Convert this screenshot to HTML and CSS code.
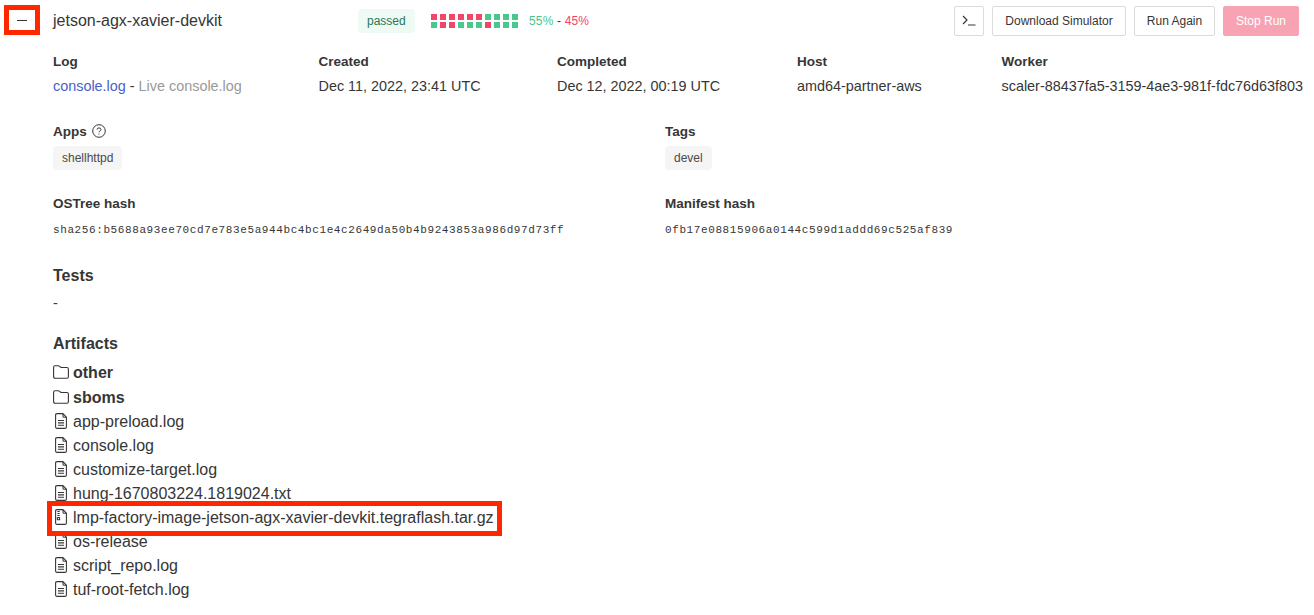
FILE: index.html
```html
<!DOCTYPE html>
<html lang="en">
<head>
<meta charset="utf-8">
<title>jetson-agx-xavier-devkit</title>
<link rel="stylesheet" href="styles.css">
</head>
<body>
<svg class="defs" aria-hidden="true">
  <symbol id="folder" viewBox="0 0 16 14"><path d="M.6 11.6V2.2Q.6.7 2.1.7H5.2Q6 .7 6.6 1.3L7.4 2Q8 2.5 8.8 2.5H13.9Q15.4 2.5 15.4 4V11.7Q15.4 13.3 13.9 13.3H2.1Q.6 13.3.6 11.6Z"/></symbol>
  <symbol id="file" viewBox="0 0 12 16"><path d="M8 .6H2Q.6.6.6 2V14Q.6 15.4 2 15.4H10Q11.4 15.4 11.4 14V4.2L8 .6V3.2Q8 4.3 9 4.3H11.4M3 7.5H9M3 9.9H9M3 12.3H9"/></symbol>
  <symbol id="archive" viewBox="0 0 12 16"><path d="M8 .6H2Q.6.6.6 2V14Q.6 15.4 2 15.4H10Q11.4 15.4 11.4 14V4.2L8 .6V3.2Q8 4.3 9 4.3H11.4M2.4 2.5H4.7M2.4 4.5H4.7M2.4 6.5H4.7M2.4 8.5H4.6V10.8H2.4Z"/></symbol>
</svg>
<main class="run">
  <header class="run-header">
    <button class="toggle" aria-label="Collapse"><span class="minus"></span></button>
    <h1 class="run-name">jetson-agx-xavier-devkit</h1>
    <span class="tag tag-passed">passed</span>
    <div class="squares">
      <i class="bad"></i><i class="bad"></i><i class="bad"></i><i class="bad"></i><i class="bad"></i><i class="bad"></i><i></i><i></i><i></i><i></i>
      <i></i><i class="bad"></i><i class="bad"></i><i></i><i></i><i></i><i class="bad"></i><i></i><i></i><i></i>
    </div>
    <div class="rate"><span class="ok">55%</span> - <span class="fail">45%</span></div>
    <div class="actions">
      <button class="btn btn-icon" aria-label="Console"><svg viewBox="0 0 14 12"><path d="M1 1L5 5L1 9M6 10H13.5"/></svg></button>
      <button class="btn btn-download">Download Simulator</button>
      <button class="btn btn-again">Run Again</button>
      <button class="btn btn-stop">Stop Run</button>
    </div>
  </header>
  <section class="details">
    <div class="meta">
      <div><h2 class="label">Log</h2><p class="value"><a class="link">console.log</a> - <span class="muted">Live console.log</span></p></div>
      <div><h2 class="label">Created</h2><p class="value">Dec 11, 2022, 23:41 UTC</p></div>
      <div><h2 class="label">Completed</h2><p class="value">Dec 12, 2022, 00:19 UTC</p></div>
      <div><h2 class="label">Host</h2><p class="value">amd64-partner-aws</p></div>
      <div><h2 class="label">Worker</h2><p class="value">scaler-88437fa5-3159-4ae3-981f-fdc76d63f803</p></div>
    </div>
    <div class="pair">
      <div><h2 class="label">Apps <svg class="help" viewBox="0 0 14 14"><circle cx="7" cy="7" r="6.3"/><path d="M5 5.6Q5 3.9 7 3.9T9 5.5Q9 6.4 8 6.9T7 8.3M7 9.6V10.5"/></svg></h2><span class="tag">shellhttpd</span></div>
      <div><h2 class="label">Tags</h2><span class="tag">devel</span></div>
    </div>
    <div class="pair">
      <div><h2 class="label">OSTree hash</h2><code class="hash">sha256:b5688a93ee70cd7e783e5a944bc4bc1e4c2649da50b4b9243853a986d97d73ff</code></div>
      <div><h2 class="label">Manifest hash</h2><code class="hash">0fb17e08815906a0144c599d1addd69c525af839</code></div>
    </div>
    <h3 class="heading">Tests</h3>
    <p class="empty">-</p>
    <h3 class="heading">Artifacts</h3>
    <ul class="files">
      <li class="dir"><svg class="folder"><use href="#folder"/></svg><span>other</span></li>
      <li class="dir"><svg class="folder"><use href="#folder"/></svg><span>sboms</span></li>
      <li><svg class="file"><use href="#file"/></svg><span>app-preload.log</span></li>
      <li><svg class="file"><use href="#file"/></svg><span>console.log</span></li>
      <li><svg class="file"><use href="#file"/></svg><span>customize-target.log</span></li>
      <li><svg class="file"><use href="#file"/></svg><span>hung-1670803224.1819024.txt</span></li>
      <li class="marked"><svg class="file"><use href="#archive"/></svg><span>lmp-factory-image-jetson-agx-xavier-devkit.tegraflash.tar.gz</span></li>
      <li><svg class="file"><use href="#file"/></svg><span>os-release</span></li>
      <li><svg class="file"><use href="#file"/></svg><span>script_repo.log</span></li>
      <li><svg class="file"><use href="#file"/></svg><span>tuf-root-fetch.log</span></li>
    </ul>
  </section>
</main>
</body>
</html>
```
FILE: styles.css
```css
*, *::before, *::after { box-sizing: border-box; margin: 0; padding: 0; }
body { background: #fff; color: #363636; font-family: "Liberation Sans", Arial, sans-serif; overflow: hidden; }
svg { fill: none; stroke: #363636; stroke-width: 1.1; stroke-linejoin: round; }
.defs { display: none; }
button { font: inherit; color: inherit; background: #fff; }
.run-header { display: flex; align-items: center; height: 42px; padding: 0 15px 0 4px; }
.toggle { display: flex; align-items: center; justify-content: center; width: 36px; height: 30px; margin-top: -2px; border: 5px solid #ff2600; }
.minus { width: 10px; height: 1px; background: #363636; }
.run-name { width: 305px; margin-left: 13px; font-size: 16px; font-weight: 400; line-height: 24px; white-space: nowrap; }
.tag { display: inline-flex; align-items: center; height: 24px; padding: 0 9px; border-radius: 4px; background: #f5f5f5; color: #4a4a4a; font-size: 12px; }
.tag-passed { width: 57px; background: #effaf5; color: #257953; }
.squares { display: grid; grid-template-columns: repeat(10, 6px); gap: 2px 3px; margin-left: 16px; }
.squares i { height: 6px; background: #48c78e; }
.squares .bad { background: #f14668; }
.rate { margin-left: 11px; font-size: 12px; letter-spacing: .16px; white-space: nowrap; }
.ok { color: #48c78e; }
.fail { color: #f14668; }
.actions { display: flex; gap: 8px; margin-left: auto; }
.btn { display: flex; align-items: center; justify-content: center; height: 30px; border: 1px solid #dbdbdb; border-radius: 2px; font-size: 12px; white-space: nowrap; }
.btn-icon { width: 30px; }
.btn-icon svg { flex: none; width: 14px; height: 12px; }
.btn-download { width: 134px; }
.btn-again { width: 81px; }
.btn-stop { width: 76px; border-color: #f8a3b4; background: #f8a3b4; color: #fff; }
.details { padding-left: 53px; }
.meta { display: grid; grid-template-columns: 265.5px 238.5px 240px 204.5px auto; height: 79px; padding-top: 9px; }
.label { display: flex; align-items: center; gap: 5px; height: 20px; font-size: 13.5px; font-weight: 700; white-space: nowrap; }
.value { margin-top: 4px; font-size: 14.4px; line-height: 22px; white-space: nowrap; }
.link { color: #485fc7; }
.muted { color: #999; }
.help { width: 14px; height: 14px; stroke-width: 1; }
.pair { display: grid; grid-template-columns: 612px 1fr; height: 72px; }
.pair .tag { margin-top: 5px; }
.hash { display: block; margin-top: 9px; font-family: "Liberation Mono", "Courier New", monospace; font-size: 11px; letter-spacing: .6px; line-height: 16px; }
.heading { padding-top: 1px; font-size: 16px; line-height: 20px; }
.empty { height: 47px; padding-top: 7px; font-size: 14.4px; line-height: 20px; }
.files { padding-top: 6px; list-style: none; }
.files li { position: relative; display: flex; align-items: center; height: 24px; font-size: 16px; line-height: 22px; white-space: nowrap; }
.files span { padding-top: 2px; }
.files .dir { height: 24.5px; font-weight: 700; }
.files svg { flex: none; }
.folder { width: 16px; height: 14px; margin-right: 4px; }
.file { width: 12px; height: 16px; margin: 0 6px 0 2px; }
.marked::after { content: ""; position: absolute; left: -6px; top: -4px; z-index: 1; width: 455px; height: 35px; border: 5px solid #ff2600; }
```
